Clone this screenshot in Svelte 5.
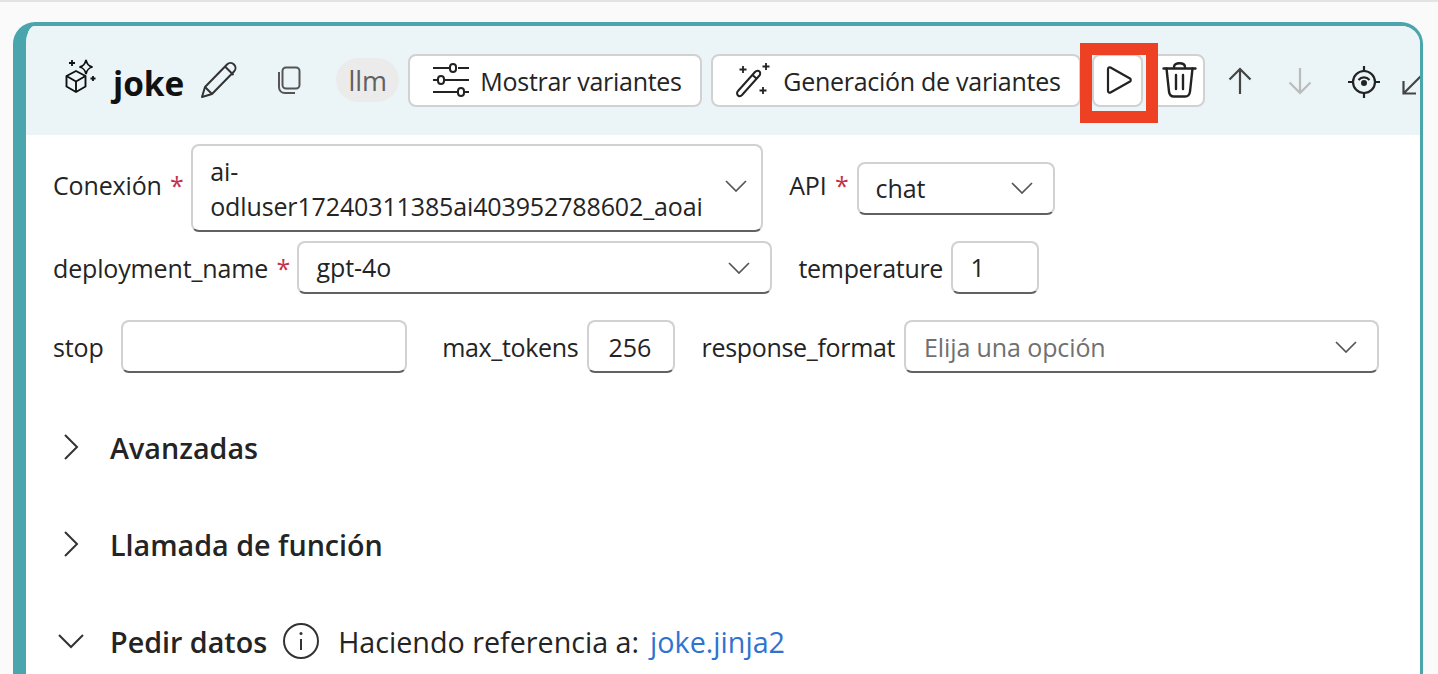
<script>
  const chevron = "M1 1l10 10L21 1";
</script>

<div class="page">
  <div class="card">
    <header class="head">
      <svg class="node-icon" width="34" height="36" viewBox="0 0 34 36" fill="none" stroke="#111" stroke-width="1.900">
        <path d="M12 14l9.500 5v10.500L12 35l-9.500-5.500V19z" stroke-linejoin="round" />
        <path d="M2.500 19l9.500 5.500 9.500-5.500M12 24.500V35" stroke-linejoin="round" />
        <path d="M22 3c1 4.500 2.500 6 6.500 7-4 1-5.500 2.500-6.500 7-1-4.500-2.500-6-6.500-7 4-1 5.500-2.500 6.500-7z" stroke-width="1.800" />
        <path d="M8 3v6M5 6h6M29 19v5M26.500 21.500h5" stroke-width="1.800" />
      </svg>
      <span class="title">joke</span>
      <svg class="pencil" width="38" height="38" viewBox="0 0 38 38" fill="none" stroke="#333" stroke-width="2" stroke-linejoin="round">
        <path d="M2 36l3-10L27 3.500c2-2 5-2 7 0s2 5 0 7L12 33z" />
        <path d="M25 5.500l8.500 8.500M5 26l7 7" />
      </svg>
      <svg class="copy" width="24" height="28" viewBox="0 0 24 28" fill="none" stroke="#555" stroke-width="2">
        <rect x="5.500" y="1.500" width="17" height="21" rx="3.500" />
        <path d="M2 6v15c0 3.500 2.500 6 6 6h10" />
      </svg>
      <span class="pill">llm</span>
      <button class="btn first">
        <svg width="38" height="34" viewBox="0 0 38 34" fill="none" stroke="#222" stroke-width="2">
          <path d="M1 5h17M26 5h11M1 17h5M13 17h24M1 29h25M33 29h4" />
          <rect x="18" y="1" width="6" height="8" rx="3" />
          <rect x="6" y="13" width="6" height="8" rx="3" />
          <rect x="26" y="25" width="6" height="8" rx="3" />
        </svg>
        Mostrar variantes
      </button>
      <button class="btn second">
        <svg width="36" height="36" viewBox="0 0 36 36" fill="none" stroke="#222" stroke-width="2">
          <path d="M3 29L20 10c1.500-1.500 3.500-1.500 4.500-.5s1 3-.5 4.500L7 33c-1.500 1.500-3 1.500-4 .5s-1.500-3 0-4.500zM17.500 13l4.500 4" stroke-linejoin="round" />
          <path d="M8 4v7M4.500 7.500h7M31 1v7M27.500 4.500h7M28 25v7M24.500 28.500h7" stroke-width="1.800" />
        </svg>
        Generación de variantes
      </button>
      <button class="btn play">
        <svg width="26" height="28" viewBox="0 0 26 28" fill="none" stroke="#222" stroke-width="2.200" stroke-linejoin="round">
          <path d="M2 3c0-1.500 1.500-2 2.500-1.500L24 12.500c1 .6 1 2.400 0 3L4.500 26.500C3.500 27 2 26.500 2 25z" />
        </svg>
      </button>
      <button class="btn trash">
        <svg width="35" height="36" viewBox="0 0 35 36" fill="none" stroke="#222" stroke-width="2.400" stroke-linecap="round">
          <path d="M1.500 6.500h32M12 6.500V5c0-2.200 2-3.800 5.500-3.800S23 2.800 23 5v1.500" />
          <path d="M4.500 6.500l2.500 23c.3 3 2.200 5 5 5h11c2.800 0 4.700-2 5-5l2.500-23M14 13v14M21 13v14" />
        </svg>
      </button>
      <svg class="arrow up" width="24" height="28" viewBox="0 0 24 28" fill="none" stroke="#444" stroke-width="2.200"><path d="M12 27V2M1.500 12.500L12 2l10.500 10.500" /></svg>
      <svg class="arrow down" width="24" height="28" viewBox="0 0 24 28" fill="none" stroke="#bbb" stroke-width="2.200"><path d="M12 1v25M1.500 15.500L12 26l10.500-10.500" /></svg>
      <svg class="target" width="34" height="34" viewBox="0 0 34 34" fill="none" stroke="#222" stroke-width="2.200">
        <path d="M17 1v5M17 28v5M1 17h5M28 17h5" />
        <circle cx="17" cy="17" r="11" />
        <path d="M11.500 15c3-3.500 8-3.500 11 0" />
        <circle cx="17" cy="18" r="3" fill="#222" stroke="none" />
      </svg>
      <svg class="shrink" width="24" height="24" viewBox="0 0 24 24" fill="none" stroke="#444" stroke-width="2.200"><path d="M1.500 22.500L23 1M1.500 10v12.500H14" /></svg>
    </header>

    <div class="body">
      <div class="row r1">
        <span class="label l-con">Conexión <i>*</i></span>
        <div class="field tall">
          <span class="val">ai-<br />odluser17240311385ai403952788602_aoai</span>
          <svg class="chev up-chev" width="22" height="12" viewBox="0 0 22 12" fill="none" stroke="#555" stroke-width="1.700"><path d={chevron} /></svg>
        </div>
        <span class="label api">API <i>*</i></span>
        <div class="field f-api wide-chev">
          <span class="val">chat</span>
          <svg class="chev" width="22" height="12" viewBox="0 0 22 12" fill="none" stroke="#555" stroke-width="1.700"><path d={chevron} /></svg>
        </div>
      </div>

      <div class="row r2">
        <span class="label">deployment_name <i>*</i></span>
        <div class="field f-dep wide-chev">
          <span class="val">gpt-4o</span>
          <svg class="chev" width="22" height="12" viewBox="0 0 22 12" fill="none" stroke="#555" stroke-width="1.700"><path d={chevron} /></svg>
        </div>
        <span class="label tight temp">temperature</span>
        <div class="field f-num"><span class="val">1</span></div>
      </div>

      <div class="row r3">
        <span class="label">stop</span>
        <div class="field f-stop"></div>
        <span class="label tight max">max_tokens</span>
        <div class="field f-num small"><span class="val">256</span></div>
        <span class="label tight resp">response_format</span>
        <div class="field f-resp wide-chev">
          <span class="val ph">Elija una opción</span>
          <svg class="chev" width="22" height="12" viewBox="0 0 22 12" fill="none" stroke="#555" stroke-width="1.700"><path d={chevron} /></svg>
        </div>
      </div>

      <div class="section s1">
        <svg class="caret" width="16" height="26" viewBox="0 0 16 26" fill="none" stroke="#333" stroke-width="2"><path d="M2 1l12 12L2 25" /></svg>
        <span class="sec-title">Avanzadas</span>
      </div>
      <div class="section s2">
        <svg class="caret" width="16" height="26" viewBox="0 0 16 26" fill="none" stroke="#333" stroke-width="2"><path d="M2 1l12 12L2 25" /></svg>
        <span class="sec-title">Llamada de función</span>
      </div>
      <div class="section s3">
        <svg class="caret open" width="26" height="16" viewBox="0 0 26 16" fill="none" stroke="#333" stroke-width="2"><path d="M1 2l12 12L25 2" /></svg>
        <span class="sec-title">Pedir datos</span>
        <svg class="info" width="36" height="36" viewBox="0 0 36 36" fill="none" stroke="#333" stroke-width="2">
          <circle cx="18" cy="18" r="17" />
          <path d="M18 16v11" />
          <circle cx="18" cy="10.500" r="1.500" fill="#333" stroke="none" />
        </svg>
        <span class="ref">Haciendo referencia a:</span>
        <span class="link">joke.jinja2</span>
      </div>
    </div>
  </div>
  <div class="highlight"></div>
</div>

<style>
  :global(body) {
    background: #fafafa;
  }

  .page {
    position: relative;
    height: 674px;
    overflow: hidden;
    box-sizing: border-box;
    padding: 22px 15px 0 13px;
    border-top: 2px solid #e3e3e3;
    font-family: "Open Sans", "Noto Sans", sans-serif;
    color: #242424;
  }

  .card {
    height: 800px;
    margin-top: -2px;
    box-sizing: border-box;
    background: #fff;
    border: solid #4ba5ad;
    border-width: 4px 3px 0 13px;
    border-radius: 22px 22px 0 0;
    overflow: hidden;
  }

  .head {
    height: 109px;
    background: #ebf4f6;
    display: flex;
    align-items: center;
    white-space: nowrap;
    overflow: hidden;
  }

  .node-icon {
    flex: none;
    margin-left: 38px;
    margin-top: -12px;
  }

  .title {
    font-size: 33.400px;
    font-weight: 700;
    color: #111;
    margin-left: 15px;
    margin-top: 4px;
  }

  .pencil {
    flex: none;
    margin-left: 16px;
    margin-top: -2px;
  }

  .copy {
    flex: none;
    margin-left: 39px;
    margin-top: -2px;
  }

  .pill {
    flex: none;
    margin-left: 35px;
    width: 63px;
    height: 44px;
    line-height: 46px;
    margin-top: -2px;
    text-align: center;
    border-radius: 22px;
    background: #ebebeb;
    color: #616161;
    font-size: 27px;
  }

  .btn {
    flex: none;
    box-sizing: border-box;
    height: 53px;
    margin-top: -1px;
    display: flex;
    align-items: center;
    justify-content: flex-start;
    background: #fff;
    border: 2px solid #d1d1d1;
    border-radius: 8px;
    font: inherit;
    font-size: 25px;
    letter-spacing: -0.280px;
    color: #242424;
    padding: 2px 0 0 22px;
  }

  .btn svg {
    margin-top: -2px;
  }

  .first {
    margin-left: 9px;
    width: 294px;
    gap: 10px;
  }

  .second {
    margin-left: 9px;
    width: 370px;
    gap: 12px;
  }

  .play {
    margin-left: 11px;
    width: 51px;
    padding-left: 12px;
  }

  .trash {
    margin-left: 7px;
    width: 55px;
    padding-left: 10px;
  }

  .arrow.up {
    flex: none;
    margin-left: 23px;
    margin-top: 1px;
  }

  .arrow.down {
    flex: none;
    margin-left: 36px;
    margin-top: 1px;
  }

  .target {
    flex: none;
    margin-left: 35px;
    margin-top: 3px;
  }

  .shrink {
    flex: none;
    margin-left: 21px;
    margin-top: 4px;
  }

  .body {
    padding: 9px 0 0 27px;
  }

  .row {
    display: flex;
    align-items: center;
  }

  .r2 {
    margin-top: 9px;
  }

  .r3 {
    margin-top: 26px;
  }

  .label {
    font-size: 25px;
    letter-spacing: -0.150px;
    white-space: nowrap;
    color: #242424;
  }

  .tight {
    letter-spacing: -0.320px;
  }

  .label i {
    color: #c4314b;
    font-style: normal;
    margin-left: 2px;
  }

  .l-con {
    margin-top: -6px;
  }

  .field {
    box-sizing: border-box;
    position: relative;
    height: 53px;
    background: #fff;
    border: 2px solid #d1d1d1;
    border-bottom-color: #616161;
    border-radius: 8px;
    display: flex;
    align-items: center;
    justify-content: space-between;
    flex: none;
    font-size: 25px;
  }

  .val {
    padding-left: 18px;
    line-height: 35px;
    letter-spacing: -0.100px;
    white-space: nowrap;
  }

  .ph {
    color: #707070;
    padding-top: 2px;
  }

  .small .val {
    padding-left: 20px;
    padding-top: 2px;
  }

  .chev {
    flex: none;
    margin-right: 14px;
  }

  .up-chev {
    margin-top: -4px;
  }

  .wide-chev .chev {
    margin-right: 20px;
  }

  .tall {
    height: 88px;
    width: 572px;
    margin-left: 7.500px;
  }

  .tall .val {
    padding-top: 2px;
    padding-left: 17px;
    letter-spacing: -0.130px;
  }

  .api {
    margin-left: 26px;
    margin-top: -6px;
  }

  .f-api {
    width: 198px;
    margin-left: 8px;
    margin-top: 0;
  }

  .f-api .val {
    padding-left: 17px;
  }

  .f-dep {
    width: 475px;
    margin-left: 6.500px;
  }

  .temp {
    margin-left: 27px;
  }

  .f-num {
    width: 88px;
    margin-left: 7.500px;
  }

  .f-num.small {
    margin-left: 8.200px;
  }

  .f-stop {
    width: 286px;
    margin-left: 17.600px;
  }

  .max {
    margin-left: 35px;
  }

  .resp {
    margin-left: 27px;
  }

  .f-resp {
    width: 475px;
    margin-left: 8.800px;
  }

  .section {
    display: flex;
    align-items: center;
    height: 40px;
  }

  .s1 {
    margin-top: 54px;
  }

  .s2 {
    margin-top: 57px;
  }

  .s3 {
    margin-top: 57px;
  }

  .caret {
    flex: none;
    margin-left: 10px;
    margin-right: 31px;
  }

  .caret.open {
    margin-left: 5px;
    margin-right: 26px;
  }

  .sec-title {
    font-size: 28.700px;
    font-weight: 600;
    color: #242424;
  }

  .info {
    flex: none;
    margin-left: 16px;
  }

  .ref {
    font-size: 28.700px;
    font-weight: 400;
    margin-left: 19px;
  }

  .link {
    font-size: 28.700px;
    color: #2f73d0;
    margin-left: 11px;
  }

  .highlight {
    position: absolute;
    left: 1080px;
    top: 41px;
    width: 78px;
    height: 80px;
    box-sizing: border-box;
    border: 12px solid #ee4123;
    pointer-events: none;
  }
</style>
